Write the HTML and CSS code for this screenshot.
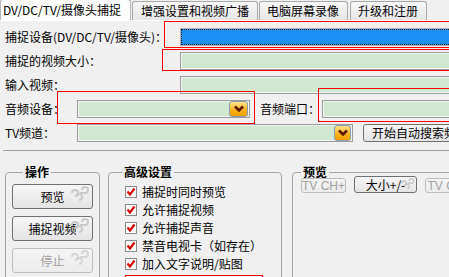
FILE: index.html
```html
<!DOCTYPE html>
<html>
<head>
<meta charset="utf-8">
<link rel="stylesheet" href="styles.css">
</head>
<body>
<div class="app">
  <div class="tabs">
    <div class="tab active">DV/DC/TV/摄像头捕捉</div>
    <div class="tab t2">增强设置和视频广播</div>
    <div class="tab t3">电脑屏幕录像</div>
    <div class="tab t4">升级和注册</div>
  </div>

  <div class="form">
    <div class="row">
      <span class="label long">捕捉设备(DV/DC/TV/摄像头)：</span>
      <div class="field selected"></div>
    </div>
    <div class="row">
      <span class="label long">捕捉的视频大小：</span>
      <div class="field"></div>
    </div>
    <div class="row">
      <span class="label long">输入视频：</span>
      <div class="field"></div>
    </div>
    <div class="row">
      <span class="label short">音频设备：</span>
      <div class="field combo audio">
        <span class="drop"><svg width="12" height="8" viewBox="0 0 12 8"><path d="M2 1.5 L6 5.5 L10 1.5" fill="none" stroke="#5a1800" stroke-width="2.6"/></svg></span>
      </div>
      <span class="label port">音频端口：</span>
      <div class="field"></div>
    </div>
    <div class="row">
      <span class="label short">TV频道：</span>
      <div class="field combo tv">
        <span class="drop"><svg width="12" height="8" viewBox="0 0 12 8"><path d="M2 1.5 L6 5.5 L10 1.5" fill="none" stroke="#5a1800" stroke-width="2.6"/></svg></span>
      </div>
      <button class="btn search">开始自动搜索频道</button>
    </div>
  </div>

  <div class="sep"></div>

  <div class="groups">
    <fieldset class="group ops">
      <legend>操作</legend>
      <div class="ops-list">
        <button class="btn big">预览<svg class="swirl" width="24" height="18" viewBox="0 0 24 18"><g fill="none" stroke="#c9c9c9" stroke-width="2"><path d="M5 8a3 3 0 1 1 3 3"/><path d="M15 5a3 3 0 1 1 3 3h-5"/><path d="M12 15a3 3 0 1 0-3-3"/></g></svg></button>
        <button class="btn big">捕捉视频<svg class="swirl" width="24" height="18" viewBox="0 0 24 18"><g fill="none" stroke="#c9c9c9" stroke-width="2"><path d="M5 8a3 3 0 1 1 3 3"/><path d="M15 5a3 3 0 1 1 3 3h-5"/><path d="M12 15a3 3 0 1 0-3-3"/></g></svg></button>
        <button class="btn big disabled">停止<svg class="swirl" width="24" height="18" viewBox="0 0 24 18"><g fill="none" stroke="#d6d6d6" stroke-width="2"><path d="M5 8a3 3 0 1 1 3 3"/><path d="M15 5a3 3 0 1 1 3 3h-5"/><path d="M12 15a3 3 0 1 0-3-3"/></g></svg></button>
      </div>
    </fieldset>

    <fieldset class="group adv">
      <legend>高级设置</legend>
      <div class="checks">
        <label class="check"><span class="box"><svg width="10" height="10" viewBox="0 0 10 10"><path d="M1.5 4.5 L4 7.5 L8.5 1.5" fill="none" stroke="#d40000" stroke-width="2.2"/></svg></span>捕捉时同时预览</label>
        <label class="check"><span class="box"><svg width="10" height="10" viewBox="0 0 10 10"><path d="M1.5 4.5 L4 7.5 L8.5 1.5" fill="none" stroke="#d40000" stroke-width="2.2"/></svg></span>允许捕捉视频</label>
        <label class="check"><span class="box"><svg width="10" height="10" viewBox="0 0 10 10"><path d="M1.5 4.5 L4 7.5 L8.5 1.5" fill="none" stroke="#d40000" stroke-width="2.2"/></svg></span>允许捕捉声音</label>
        <label class="check"><span class="box"><svg width="10" height="10" viewBox="0 0 10 10"><path d="M1.5 4.5 L4 7.5 L8.5 1.5" fill="none" stroke="#d40000" stroke-width="2.2"/></svg></span>禁音电视卡（如存在）</label>
        <label class="check"><span class="box"><svg width="10" height="10" viewBox="0 0 10 10"><path d="M1.5 4.5 L4 7.5 L8.5 1.5" fill="none" stroke="#d40000" stroke-width="2.2"/></svg></span>加入文字说明/贴图</label>
      </div>
    </fieldset>

    <fieldset class="group prev">
      <legend>预览</legend>
      <div class="prev-bar">
        <button class="btn small disabled">TV CH+</button>
        <button class="btn small size">大小+/-<svg class="swirl sm" width="18" height="14" viewBox="0 0 24 18"><g fill="none" stroke="#c9c9c9" stroke-width="2"><path d="M5 8a3 3 0 1 1 3 3"/><path d="M15 5a3 3 0 1 1 3 3h-5"/><path d="M12 15a3 3 0 1 0-3-3"/></g></svg></button>
        <button class="btn small disabled">TV CH-</button>
      </div>
    </fieldset>
  </div>

  <div class="mark m1"></div>
  <div class="mark m2"></div>
  <div class="mark m3"></div>
  <div class="mark m4"></div>
  <div class="mark m5"></div>
</div>
</body>
</html>
```

FILE: styles.css
```css
* { box-sizing: border-box; }

html, body {
  margin: 0;
  padding: 0;
  background: #f0f0f0;
  overflow: hidden;
}

body {
  font-family: "Noto Sans CJK SC", "Microsoft YaHei", sans-serif;
  font-size: 12px;
  color: #000;
  text-spacing-trim: space-all;
}

.app {
  position: relative;
  width: 449px;
  height: 277px;
  overflow: hidden;
}

/* tabs */
.tabs {
  display: flex;
  height: 21px;
  align-items: flex-end;
  border-bottom: 1px solid #ffffff;
  white-space: nowrap;
}

.tab {
  height: 19px;
  line-height: 17px;
  padding: 0 8px;
  border: 1px solid #a9a9a9;
  border-bottom: none;
  border-radius: 3px 3px 0 0;
  background: linear-gradient(#f7f7f7, #e6e6e6);
  margin-left: 1px;
  flex: none;
}

.tab.active {
  height: 21px;
  line-height: 19px;
  width: 131px;
  padding: 0 0 0 2px;
  margin-left: 0;
  background: #fdfdfb;
  border-color: #b8b8b8;
}

.tab.t2 { width: 126px; padding-left: 8px; }
.tab.t3 { width: 89px; padding-left: 7px; }
.tab.t4 { width: 77px; margin-left: 2px; padding-left: 7px; }

/* form */
.form {
  display: flex;
  flex-direction: column;
  gap: 6px;
  padding: 7px 0 0 5px;
  width: 700px;
}

.row {
  display: flex;
  align-items: center;
  height: 18px;
}

.label {
  flex: none;
  white-space: nowrap;
  line-height: 18px;
}

.label.long { width: 175px; }
.label.short { width: 72px; }
.label.port { width: 62px; margin-left: 10px; }

.field {
  height: 18px;
  flex: 1;
  background: #cfe8cf;
  border: 1px solid #9c9c9c;
  box-shadow: inset 0 0 0 1px #f4f4f4;
  position: relative;
}

.field.selected {
  background: #1e8ff6;
  border: 1px solid #b0b0b0;
  box-shadow: inset 0 0 0 1px #1e8ff6;
  outline: 1px dotted #222;
  outline-offset: -2px;
}

.field.combo {
  flex: none;
  display: flex;
  justify-content: flex-end;
  align-items: center;
  padding-right: 1px;
}

.field.audio { width: 173px; }
.field.tv { width: 276px; }

.drop {
  width: 19px;
  height: 16px;
  border: 1px solid #8a9bb4;
  border-radius: 3px;
  background: linear-gradient(#ffe487, #f8b01a 60%, #f5a000);
  display: flex;
  align-items: center;
  justify-content: center;
}

.tv .drop { width: 17px; }

.btn {
  font-family: "Noto Sans CJK SC", "Microsoft YaHei", sans-serif;
  font-size: 12px;
  color: #000;
  border: 1px solid #707070;
  border-radius: 3px;
  background: linear-gradient(#f6f6f6, #e4e4e4);
  padding: 0;
  position: relative;
  overflow: hidden;
  flex: none;
}

.btn.search {
  margin-left: 10px;
  height: 18px;
  width: 120px;
  text-align: left;
  padding-left: 8px;
  line-height: 14px;
}

.sep {
  margin: 8px 0 0 3px;
  height: 1px;
  background: #a0a0a0;
}

/* groups */
.groups {
  display: flex;
  padding: 13px 0 0 5px;
}

.group {
  margin: 0;
  border: 1px solid #a4a4a4;
  border-radius: 4px;
  height: 140px;
  flex: none;
  padding: 0;
}

.group legend {
  font-weight: bold;
  padding: 0 2px;
  line-height: 16px;
}

.ops {
  width: 95px;
  padding: 4px 0 0 6px;
}

.ops legend { margin-left: 11px; }

.ops-list {
  display: flex;
  flex-direction: column;
  gap: 7px;
}

.btn.big {
  width: 81px;
  height: 25px;
  line-height: 22px;
}

.btn.disabled {
  color: #a0a0a0;
  border-color: #bdbdbd;
  background: linear-gradient(#f4f4f4, #ececec);
}

.swirl {
  position: absolute;
  right: 1px;
  top: 0;
}

.swirl.sm { right: 0; top: 0; }

.adv {
  width: 174px;
  margin-left: 8px;
  padding: 5px 0 0 16px;
}

.adv legend { margin-left: -3px; }

.checks {
  display: flex;
  flex-direction: column;
  gap: 5px;
}

.check {
  display: flex;
  align-items: center;
  height: 13px;
  gap: 5px;
  white-space: nowrap;
}

.box {
  width: 12px;
  height: 12px;
  border: 1px solid #8a8a8a;
  background: #fff;
  display: flex;
  align-items: center;
  justify-content: center;
  flex: none;
}

.prev {
  width: 200px;
  margin-left: 10px;
  padding: 0 0 0 8px;
}

.prev legend { margin-left: 0; }

.prev-bar {
  display: flex;
  gap: 8px;
  margin-top: -2px;
}

.btn.small {
  height: 15px;
  line-height: 12px;
  width: 45px;
  font-family: "Liberation Sans", "Noto Sans CJK SC", sans-serif;
  font-size: 12px;
}

.btn.small.size {
  width: 63px;
  height: 17px;
  margin-top: -2px;
  font-family: "Noto Sans CJK SC", sans-serif;
}

/* red annotation boxes */
.mark {
  position: absolute;
  border: 1px solid #ff0000;
  pointer-events: none;
}

.m1 { left: 164px; top: 21px; width: 300px; height: 27px; }
.m2 { left: 162px; top: 49px; width: 300px; height: 22px; }
.m3 { left: 57px; top: 91px; width: 198px; height: 33px; }
.m4 { left: 318px; top: 88px; width: 150px; height: 34px; }
.m5 { left: 125px; top: 275px; width: 138px; height: 10px; }
```
